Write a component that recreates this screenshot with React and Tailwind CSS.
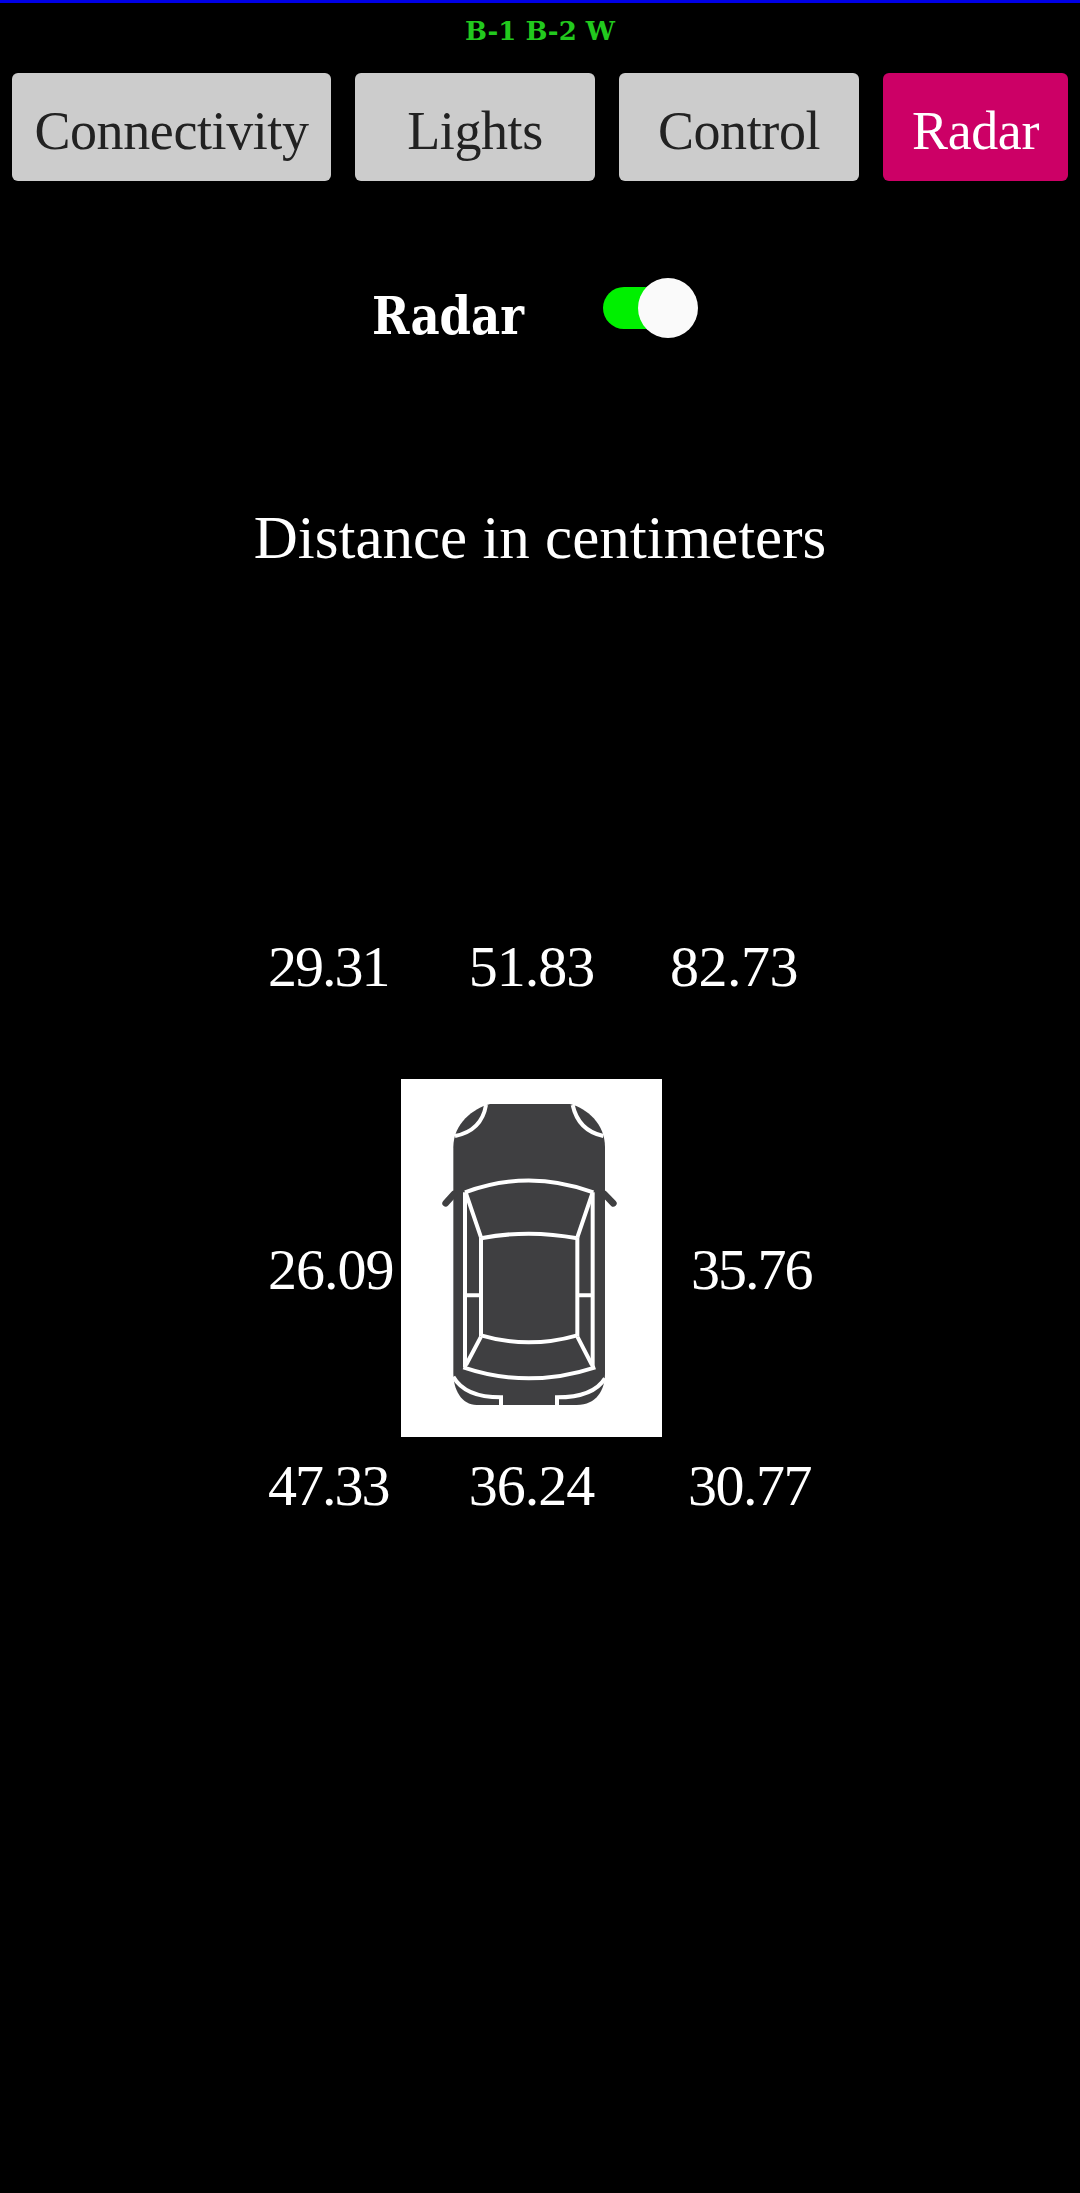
import React from 'react';

const serif = 'font-["Liberation_Serif",serif]';

const tabs = [
  { label: 'Connectivity', w: 'w-[319px]', on: false },
  { label: 'Lights', w: 'w-[240px]', on: false },
  { label: 'Control', w: 'w-[240px]', on: false },
  { label: 'Radar', w: 'w-[185px]', on: true },
];

const CarTop = () => (
  <svg viewBox="63 57 783 1074" className="block w-full h-full">
    <path
      d="M330 132 L570 132 C 620 145 675 190 675 262 L675 940 C 675 990 650 1035 590 1035 L290 1035 C 245 1035 220 990 220 940 L220 262 C 220 190 280 145 330 132 Z"
      fill="#3f3f41"
    />
    {/* mirrors */}
    <path d="M222 402 L197 430 M673 402 L700 430" stroke="#3f3f41" strokeWidth="20" strokeLinecap="round" fill="none" />
    <g stroke="#fff" strokeWidth="12" fill="none">
      {/* headlights */}
      <path d="M318 135 Q 305 212 225 228" />
      <path d="M578 135 Q 595 212 670 228" />
      {/* windscreen */}
      <path d="M255 397 Q 445 326 640 397" />
      <path d="M303 535 Q 445 507 592 535" />
      <path d="M258 400 L303 532 M637 400 L592 532" />
      {/* sides */}
      <path d="M255 397 L255 922 M638 397 L638 922" />
      <path d="M303 532 L303 828 M592 532 L592 828" />
      <path d="M258 706 L300 706 M595 706 L635 706" />
      {/* rear window */}
      <path d="M303 826 Q 445 868 592 826" />
      <path d="M303 830 L258 915 M592 830 L636 915" />
      <path d="M250 922 Q 445 988 646 922" />
      {/* bumper */}
      <path d="M220 950 Q 255 1012 363 1012 L363 1036" />
      <path d="M675 955 Q 640 1012 531 1012 L531 1036" />
    </g>
  </svg>
);

const Num = ({ children, className = '' }) => (
  <div className={`${serif} text-white text-[58px] leading-none ${className}`}>{children}</div>
);

export default function App() {
  return (
    <div className="min-h-[2193px] bg-black border-t-[3px] border-[#0000e6] overflow-hidden">
      <div className='h-[41px] pt-[15px] text-center font-["DejaVu_Serif",serif] font-bold text-[#22c91e] text-[26px] leading-[26px] whitespace-pre'>
        B-1 B-2 W
      </div>

      <div className="mt-[29px] pl-[12px] flex gap-[24px]">
        {tabs.map((t) => (
          <button
            key={t.label}
            className={`${t.w} h-[108px] pt-[8px] rounded-[6px] ${serif} text-[54px] tracking-[-0.4px] leading-none ${t.on ? 'bg-[#cc0066] text-white' : 'bg-[#cccccc] text-[#222222]'}`}
          >
            {t.label}
          </button>
        ))}
      </div>

      <div className="mt-[97px] flex items-center h-[60px] pl-[372px]">
        <div className="w-[231px] pt-[16px]">
          <span className='inline-block scale-y-[1.15] font-["DejaVu_Serif",serif] font-bold text-white text-[45px] leading-none'>Radar</span>
        </div>
        <div className="relative w-[84px] h-[42px] rounded-full bg-[#00f000]">
          <div className="absolute left-[35px] top-[-9px] w-[60px] h-[60px] rounded-full bg-[#fafafa]" />
        </div>
      </div>

      <div className={`mt-[169px] text-center ${serif} text-white text-[61px] leading-none`}>Distance in centimeters</div>

      <div className="mt-[370px] grid grid-cols-[133px_261px_1fr] pl-[268px]">
        <Num className="tracking-[-2px]">29.31</Num>
        <Num className="text-center tracking-[-1px]">51.83</Num>
        <Num className="pl-[8px] tracking-[-0.5px]">82.73</Num>

        <div className="col-span-3 h-[83px]" />

        <Num className="self-center pt-[24px] tracking-[-1px]">26.09</Num>
        <div className="h-[358px] bg-white">
          <CarTop />
        </div>
        <Num className="self-center pt-[24px] pl-[29px] tracking-[-2px]">35.76</Num>

        <div className="col-span-3 h-[20px]" />

        <Num className="tracking-[-2px]">47.33</Num>
        <Num className="text-center tracking-[-1px]">36.24</Num>
        <Num className="pl-[26px] tracking-[-1.5px]">30.77</Num>
      </div>
    </div>
  );
}
